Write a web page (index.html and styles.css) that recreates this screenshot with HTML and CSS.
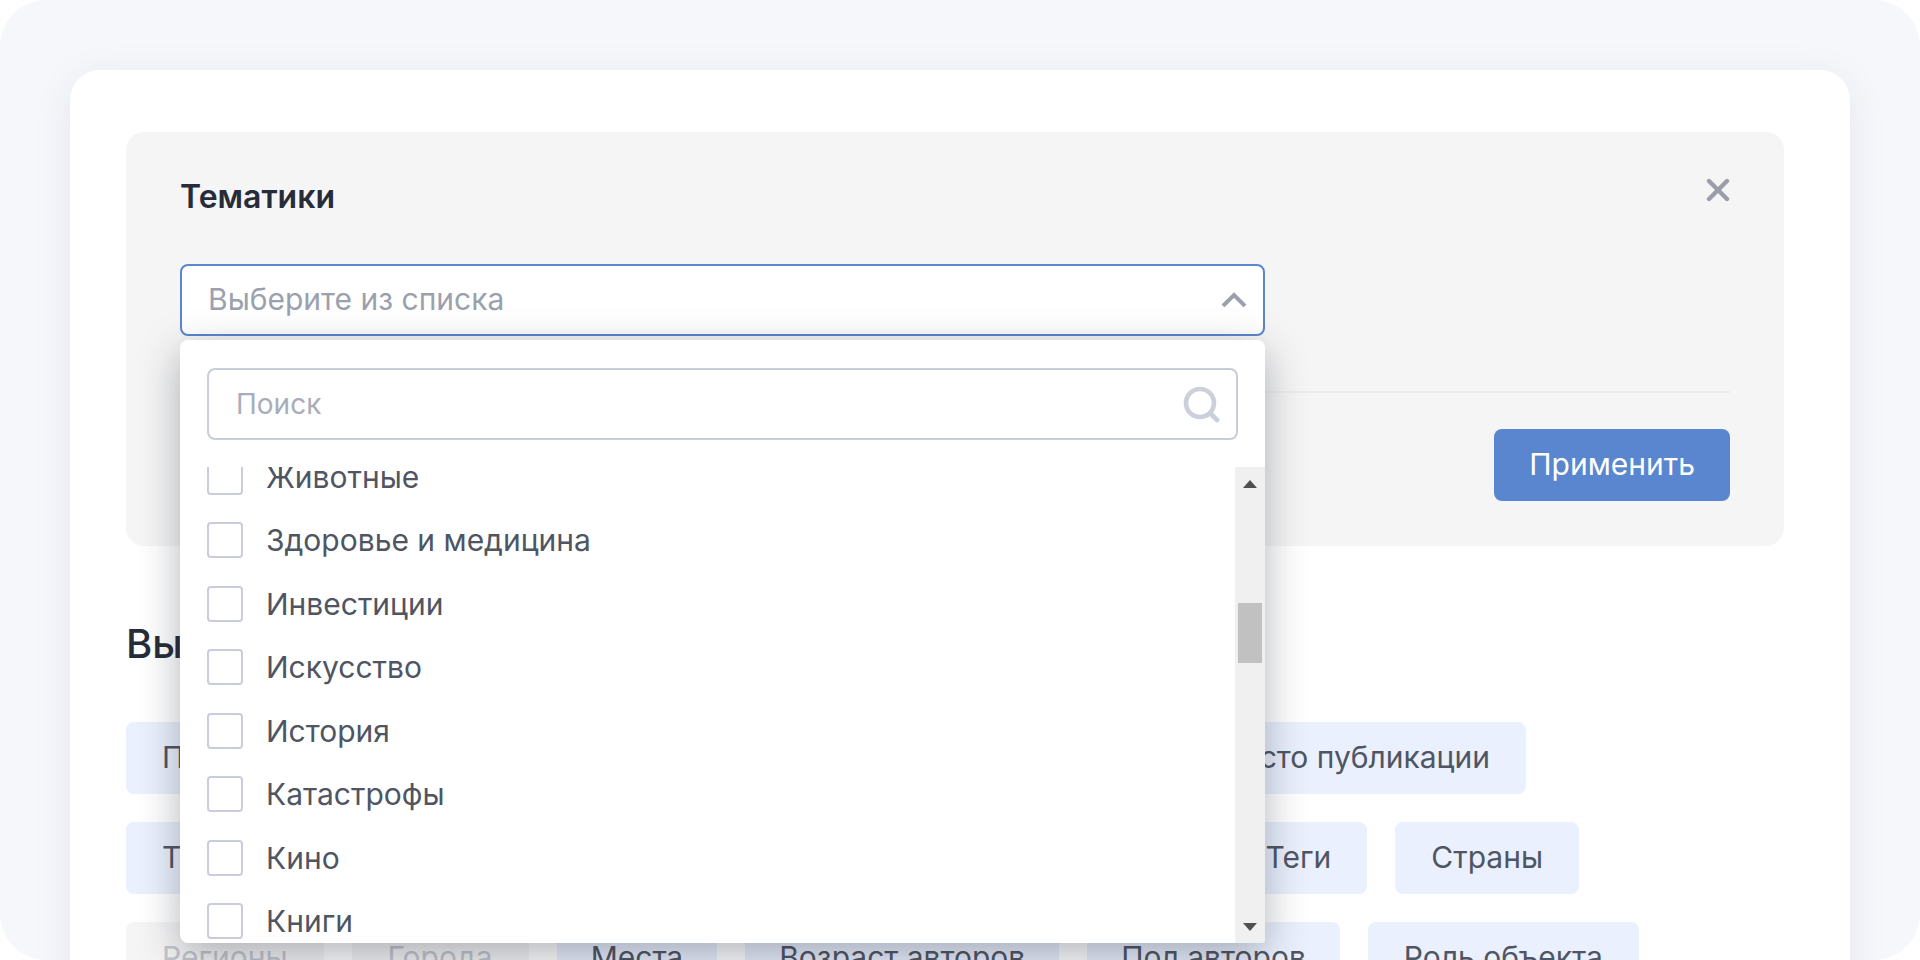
FILE: index.html
```html
<!DOCTYPE html>
<html lang="ru">
<head>
<meta charset="utf-8">
<title>Тематики</title>
<link rel="stylesheet" href="styles.css">
</head>
<body>
<div class="stage">
  <main class="card">
    <section class="panel">
      <header class="panel-head">
        <h2 class="panel-title">Тематики</h2>
        <button class="close" type="button" aria-label="Закрыть">
          <svg width="24" height="24" viewBox="0 0 24 24" fill="none" stroke="currentColor" stroke-width="4.4" stroke-linecap="round"><path d="M3 3 21 21M21 3 3 21"/></svg>
        </button>
      </header>
      <div class="picker">
        <button class="picker-toggle" type="button" aria-expanded="true" aria-controls="topics">
          <span>Выберите из списка</span>
          <svg width="26" height="16" viewBox="0 0 26 16" fill="none" stroke="currentColor" stroke-width="4"><path d="M2 15 13 4 24 15"/></svg>
        </button>
        <div class="dropdown" id="topics">
          <div class="search">
            <input class="search-input" type="text" placeholder="Поиск" aria-label="Поиск">
            <svg width="38" height="38" viewBox="0 0 38 38" fill="none" stroke="currentColor" stroke-width="4.6" stroke-linecap="round"><circle cx="18" cy="18" r="14"/><path d="M28 28 35 35"/></svg>
          </div>
          <div class="list-view">
            <ul class="options">
              <li><label class="option"><input class="check" type="checkbox">Животные</label></li>
              <li><label class="option"><input class="check" type="checkbox">Здоровье и медицина</label></li>
              <li><label class="option"><input class="check" type="checkbox">Инвестиции</label></li>
              <li><label class="option"><input class="check" type="checkbox">Искусство</label></li>
              <li><label class="option"><input class="check" type="checkbox">История</label></li>
              <li><label class="option"><input class="check" type="checkbox">Катастрофы</label></li>
              <li><label class="option"><input class="check" type="checkbox">Кино</label></li>
              <li><label class="option"><input class="check" type="checkbox">Книги</label></li>
            </ul>
            <div class="scrollbar" aria-hidden="true">
              <svg width="14" height="8" viewBox="0 0 14 8"><path d="M0 8 7 0 14 8Z" fill="#505050"/></svg>
              <div class="track"><div class="thumb"></div></div>
              <svg width="14" height="8" viewBox="0 0 14 8"><path d="M0 0 7 8 14 0Z" fill="#505050"/></svg>
            </div>
          </div>
        </div>
      </div>
      <footer class="panel-foot">
        <button class="apply" type="button">Применить</button>
      </footer>
    </section>
    <h1 class="heading">Выберите фильтр</h1>
    <div class="chips">
      <div class="chip-row row-first">
        <button class="chip push" type="button">Период</button>
        <button class="chip" type="button">Место публикации</button>
      </div>
      <div class="chip-row row-second">
        <button class="chip push" type="button">Тематики</button>
        <button class="chip" type="button">Теги</button>
        <button class="chip" type="button">Страны</button>
      </div>
      <div class="chip-row">
        <button class="chip" type="button" disabled>Регионы</button>
        <button class="chip" type="button" disabled>Города</button>
        <button class="chip snug" type="button">Места</button>
        <button class="chip snug" type="button">Возраст авторов</button>
        <button class="chip snug" type="button">Пол авторов</button>
        <button class="chip" type="button">Роль объекта</button>
      </div>
    </div>
  </main>
</div>
</body>
</html>
```
FILE: styles.css
```css
* { box-sizing: border-box; }

body {
  margin: 0;
  background: #fff;
  color: #4f5562;
  font: 30px/36px Inter, "Noto Sans", sans-serif;
}

button, input { font: inherit; color: inherit; }
button { border: 0; margin: 0; cursor: pointer; }
svg { display: block; flex: none; }

.stage {
  height: 100vh;
  overflow: hidden;
  padding: 70px 70px 0;
  border-radius: 46px;
  background: #f5f7fb;
}

.card {
  min-height: 1000px;
  padding: 62px 66px 0 56px;
  border-radius: 30px;
  background: #fff;
  box-shadow: 0 8px 40px rgba(40, 50, 60, 0.08);
}

.panel {
  padding: 40px 54px 45px;
  border-radius: 18px;
  background: #f5f5f5;
}

.panel-head {
  display: flex;
  justify-content: space-between;
  align-items: flex-start;
  margin-bottom: 42px;
}

.panel-title {
  margin: 0;
  color: #262c38;
  font-size: 32px;
  line-height: 50px;
  font-weight: 600;
}

.close {
  padding: 6px 0;
  background: none;
  color: #9b9dab;
}

.picker {
  position: relative;
  width: 1085px;
}

.picker-toggle {
  display: flex;
  justify-content: space-between;
  align-items: center;
  width: 100%;
  height: 72px;
  padding: 0 16px 2px 26px;
  border: 2px solid #5a85cf;
  border-radius: 8px;
  background: #fff;
  color: #9ba0ad;
}

.dropdown {
  position: absolute;
  top: 76px;
  left: 0;
  z-index: 2;
  width: 100%;
  padding-top: 28px;
  border-radius: 8px;
  background: #fff;
  box-shadow: 0 12px 40px rgba(30, 35, 50, 0.34);
}

.search {
  display: flex;
  align-items: center;
  height: 72px;
  margin: 0 27px 27px;
  padding-right: 16px;
  border: 2px solid #c9cddb;
  border-radius: 8px;
  color: #cbd0da;
}

.search-input {
  flex: 1;
  min-width: 0;
  padding: 0 0 0 27px;
  border: 0;
  outline: 0;
  background: none;
  font-size: 28px;
}

.search-input::placeholder { color: #a9adb8; opacity: 1; }

.list-view {
  display: flex;
  height: 476px;
  overflow: hidden;
  border-radius: 0 0 2px 8px;
}

.options {
  display: flex;
  flex: 1;
  flex-direction: column;
  justify-content: space-between;
  height: 480px;
  margin: -8px 0 0;
  padding: 0 0 0 27px;
  list-style: none;
}

.option {
  display: flex;
  align-items: center;
  gap: 23px;
}

.check {
  appearance: none;
  flex: none;
  width: 36px;
  height: 36px;
  margin: 0;
  border: 2px solid #c9cddb;
  border-radius: 4px;
  background: #fff;
}

.scrollbar {
  display: flex;
  flex-direction: column;
  align-items: center;
  width: 30px;
  padding: 13px 0 12px;
  background: #f0f0f0;
}

.track {
  flex: 1;
  width: 24px;
  padding-top: 115px;
}

.thumb {
  height: 60px;
  background: #c1c1c1;
}

.panel-foot {
  display: flex;
  justify-content: flex-end;
  margin-top: 55px;
  padding-top: 36px;
  border-top: 2px solid #ededee;
}

.apply {
  height: 72px;
  padding: 0 35px 2px;
  border-radius: 8px;
  background: #5a85cf;
  color: #fff;
}

.heading {
  margin: 74px 0 54px;
  color: #262c38;
  font-size: 40px;
  line-height: 48px;
  font-weight: 500;
}

.chips {
  display: flex;
  flex-direction: column;
  gap: 28px;
}

.chip-row {
  display: flex;
  gap: 28px;
}

.row-first { max-width: 1400px; }
.row-second { max-width: 1453px; }

.chip {
  height: 72px;
  padding: 0 36px 2px;
  border-radius: 8px;
  background: #eaf0fd;
  white-space: nowrap;
}

.snug {
  padding-right: 34px;
  padding-left: 34px;
}

.chip:disabled {
  background: #f5f5f5;
  color: #c3c6cf;
}

.push { margin-right: auto; }
```
